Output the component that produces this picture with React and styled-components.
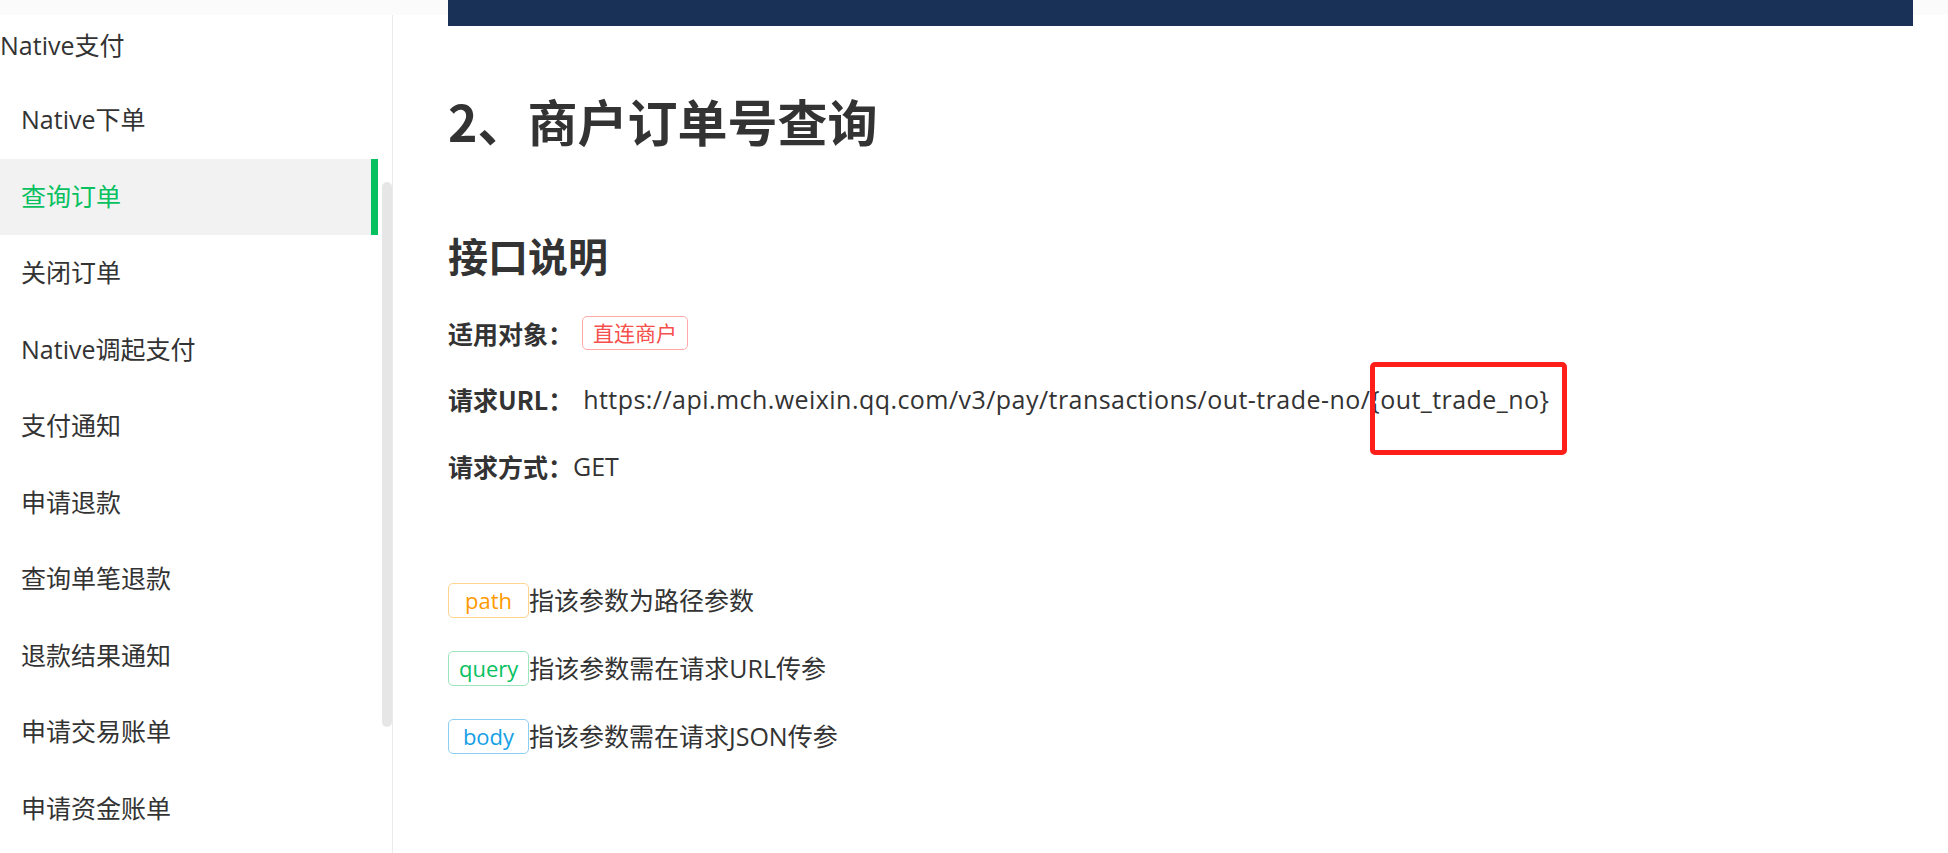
import styled, { createGlobalStyle } from "styled-components";

const GlobalStyle = createGlobalStyle`
  html, body {
    margin: 0;
    padding: 0;
    background: #fff;
  }
  body {
    font-family: "Open Sans", "Noto Sans CJK SC", sans-serif;
    color: #333;
  }
`;

const navItems = [
  "Native下单",
  "查询订单",
  "关闭订单",
  "Native调起支付",
  "支付通知",
  "申请退款",
  "查询单笔退款",
  "退款结果通知",
  "申请交易账单",
  "申请资金账单",
];

const paramTags = [
  { name: "path", tone: "orange", text: "指该参数为路径参数" },
  { name: "query", tone: "green", text: "指该参数需在请求URL传参" },
  { name: "body", tone: "blue", text: "指该参数需在请求JSON传参" },
];

const tones = {
  orange: { color: "#ff9a00", border: "#ffd48f" },
  green: { color: "#07c160", border: "#9de5bd" },
  blue: { color: "#159fe6", border: "#8ccff3" },
  red: { color: "#f5504c", border: "#ffa9a9" },
};

const Layout = styled.div`
  display: grid;
  grid-template-columns: 393px 1fr;
  height: 853px;
  overflow: hidden;
  background: linear-gradient(#fbfbfb 0 15px, #fff 15px);
`;

const Sidebar = styled.aside`
  position: relative;
  margin-top: 15px;
  background: #fff;
  border-right: 1px solid #ebebeb;
`;

const GroupTitle = styled.div`
  height: 67px;
  line-height: 60px;
  font-size: 25px;
  color: #333;
  white-space: nowrap;
`;

const NavItem = styled.div`
  width: 378px;
  height: 76.5px;
  box-sizing: border-box;
  display: flex;
  align-items: center;
  padding: 0 0 4px 21px;
  font-size: 25px;
  color: ${(p) => (p.$active ? "#07c160" : "#333")};
  background: ${(p) => (p.$active ? "#f2f2f2" : "transparent")};
  border-right: 7px solid ${(p) => (p.$active ? "#07c160" : "transparent")};
  white-space: nowrap;
`;

const ScrollThumb = styled.div`
  position: absolute;
  right: 0;
  top: 167px;
  width: 10px;
  height: 545px;
  border-radius: 5px;
  background: #e6e6e6;
`;

const Main = styled.main`
  padding: 0 35px 0 55px;
`;

const TopBar = styled.div`
  height: 26px;
  background: #1a3157;
`;

const Title = styled.h1`
  margin: 59px 0 0;
  font-family: "Noto Sans CJK SC", sans-serif;
  font-size: 50px;
  line-height: 70px;
  font-weight: 700;
  color: #333;
`;

const SubTitle = styled.h2`
  margin: 72px 0 17px;
  font-family: "Noto Sans CJK SC", sans-serif;
  font-size: 40px;
  line-height: 56px;
  font-weight: 700;
  color: #333;
`;

const InfoRow = styled.div`
  display: flex;
  align-items: center;
  height: ${(p) => p.$height || 68}px;
  font-size: 25px;
  line-height: 34px;
  white-space: nowrap;
`;

const Label = styled.span`
  font-family: "Noto Sans CJK SC", sans-serif;
  font-weight: 700;
  margin-right: ${(p) => p.$gap || 0}px;
`;

const Tag = styled.span`
  display: inline-flex;
  align-items: center;
  justify-content: center;
  box-sizing: border-box;
  height: ${(p) => (p.$small ? 34 : 35)}px;
  min-width: ${(p) => (p.$small ? 0 : 81)}px;
  padding: 0 10px;
  border: 1px solid ${(p) => tones[p.$tone].border};
  border-radius: 5px;
  color: ${(p) => tones[p.$tone].color};
  font-size: ${(p) => (p.$small ? 21 : 22)}px;
`;

const Url = styled.span`
  display: inline-block;
  letter-spacing: 0.45px;
`;

const Placeholder = styled.span`
  position: relative;
  display: inline-block;
`;

const Marker = styled.span`
  position: absolute;
  left: 0;
  top: -20px;
  width: 197px;
  height: 93px;
  box-sizing: border-box;
  border: 5px solid #fe1f1a;
  border-radius: 5px;
`;

const Legend = styled.div`
  margin-top: 66px;
`;

function App() {
  return (
    <>
      <GlobalStyle />
      <Layout>
        <Sidebar>
          <GroupTitle>Native支付</GroupTitle>
          {navItems.map((item) => (
            <NavItem key={item} $active={item === "查询订单"}>
              {item}
            </NavItem>
          ))}
          <ScrollThumb />
        </Sidebar>
        <Main>
          <TopBar />
          <Title>2、商户订单号查询</Title>
          <SubTitle>接口说明</SubTitle>
          <InfoRow $height={66}>
            <Label $gap={9}>适用对象：</Label>
            <Tag $tone="red" $small>
              直连商户
            </Tag>
          </InfoRow>
          <InfoRow $height={66}>
            <Label $gap={10}>请求URL：</Label>
            <Url>
              https://api.mch.weixin.qq.com/v3/pay/transactions/out-trade-no/
              <Placeholder>
                {"{out_trade_no}"}
                <Marker />
              </Placeholder>
            </Url>
          </InfoRow>
          <InfoRow>
            <Label>请求方式：</Label>
            <span>GET</span>
          </InfoRow>
          <Legend>
            {paramTags.map((t) => (
              <InfoRow key={t.name}>
                <Tag $tone={t.tone}>{t.name}</Tag>
                <span>{t.text}</span>
              </InfoRow>
            ))}
          </Legend>
        </Main>
      </Layout>
    </>
  );
}

export default App;
